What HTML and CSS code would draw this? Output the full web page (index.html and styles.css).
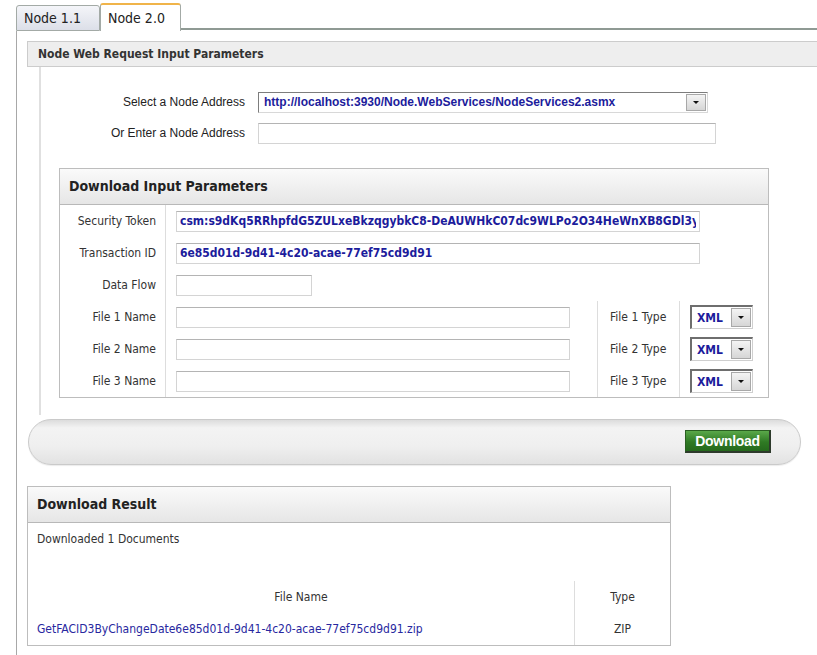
FILE: index.html
```html
<!DOCTYPE html>
<html>
<head>
<meta charset="utf-8">
<link rel="stylesheet" href="styles.css">
</head>
<body>
<div class="page">
  <div class="tabs">
    <div class="tab">Node 1.1</div>
    <div class="tab active">Node 2.0</div>
    <div class="tab-fill"></div>
  </div>
  <div class="tab-body">
    <div class="panel">
      <div class="panel-head">Node Web Request Input Parameters</div>
      <div class="panel-body">
        <div class="addr-row">
          <span class="addr-label">Select a Node Address</span>
          <div class="select addr-select">
            <span class="select-text">http://localhost:3930/Node.WebServices/NodeServices2.asmx</span>
            <span class="drop"><span class="tri"></span></span>
          </div>
        </div>
        <div class="addr-row">
          <span class="addr-label">Or Enter a Node Address</span>
          <input class="field addr-input" type="text" value="">
        </div>

        <div class="box input-box">
          <div class="box-head">Download Input Parameters</div>
          <div class="param-grid">
            <div class="lbl">Security Token</div>
            <div class="cell span3"><input class="field val w-token" type="text" value="csm:s9dKq5RRhpfdG5ZULxeBkzqgybkC8-DeAUWHkC07dc9WLPo2O34HeWnXB8GDl3yQ"></div>

            <div class="lbl">Transaction ID</div>
            <div class="cell span3"><input class="field val w-token" type="text" value="6e85d01d-9d41-4c20-acae-77ef75cd9d91"></div>

            <div class="lbl">Data Flow</div>
            <div class="cell span3"><input class="field w-flow" type="text" value=""></div>

            <div class="lbl">File 1 Name</div>
            <div class="cell sep"><input class="field w-file" type="text" value=""></div>
            <div class="cell sep type-lbl">File 1 Type</div>
            <div class="cell"><div class="select xml"><span class="select-text">XML</span><span class="drop"><span class="tri"></span></span></div></div>

            <div class="lbl">File 2 Name</div>
            <div class="cell sep"><input class="field w-file" type="text" value=""></div>
            <div class="cell sep type-lbl">File 2 Type</div>
            <div class="cell"><div class="select xml"><span class="select-text">XML</span><span class="drop"><span class="tri"></span></span></div></div>

            <div class="lbl">File 3 Name</div>
            <div class="cell sep"><input class="field w-file" type="text" value=""></div>
            <div class="cell sep type-lbl">File 3 Type</div>
            <div class="cell"><div class="select xml"><span class="select-text">XML</span><span class="drop"><span class="tri"></span></span></div></div>
          </div>
        </div>
      </div>
    </div>

    <div class="action-bar">
      <button class="dl-btn" type="button">Download</button>
    </div>

    <div class="box result-box">
      <div class="box-head">Download Result</div>
      <div class="result-body">
        <div class="result-msg">Downloaded 1 Documents</div>
        <div class="result-table">
          <div class="th name-col">File Name</div>
          <div class="th type-col">Type</div>
          <div class="td name-col link-cell"><a href="#" class="file-link">GetFACID3ByChangeDate6e85d01d-9d41-4c20-acae-77ef75cd9d91.zip</a></div>
          <div class="td type-col">ZIP</div>
        </div>
      </div>
    </div>
  </div>
</div>
</body>
</html>
```
FILE: styles.css
```css
html, body {
  margin: 0;
  padding: 0;
  background: #ffffff;
  overflow: hidden;
}

.page {
  width: 840px;
  font-family: "DejaVu Sans Condensed", "DejaVu Sans", sans-serif;
  font-size: 12px;
  color: #333333;
}

/* Tabs */
.tabs {
  display: flex;
  align-items: flex-end;
  height: 31px;
  padding-left: 16px;
}

.tab {
  box-sizing: border-box;
  height: 26px;
  width: 84px;
  padding-left: 7px;
  border: 1px solid #a3aaa6;
  border-radius: 3px 3px 0 0;
  background: linear-gradient(#f4f5f9, #dcdfe8);
  font-size: 14px;
  line-height: 24px;
  color: #222222;
}

.tab.active {
  height: 28px;
  width: 81px;
  border-top: 2px solid #f0b44a;
  border-bottom: none;
  background: #ffffff;
  line-height: 26px;
  padding-left: 7px;
}

.tab-fill {
  flex: 1;
  border-bottom: 2px solid #8f9a94;
  margin-bottom: 1px;
}

/* Tab body */
.tab-body {
  margin-left: 16px;
  border-left: 1px solid #a8a8a8;
  border-bottom: 1px solid #a8a8a8;
  padding: 10px 0 10px 10px;
}

.panel-head {
  box-sizing: border-box;
  height: 26px;
  border: 1px solid #cccccc;
  border-right: none;
  background: #eeeeee;
  padding-left: 10px;
  font-weight: bold;
  font-size: 12px;
  line-height: 24px;
  color: #333333;
}

.panel-body {
  margin-left: 12px;
  border-left: 2px solid #e0e0e0;
  padding: 25px 0 17px 0;
}

.addr-row {
  display: flex;
  align-items: center;
  gap: 13px;
  height: 20px;
  margin-bottom: 11px;
}

.addr-label {
  width: 204px;
  text-align: right;
  font-family: "Liberation Sans", Arial, sans-serif;
  font-size: 12px;
  color: #222222;
}

.select {
  box-sizing: border-box;
  display: flex;
  align-items: center;
  border: 1px solid #d8d8d8;
  border-top-color: #7d7d7d;
  border-left-color: #7d7d7d;
  background: #ffffff;
}

.select-text {
  flex: 1;
  overflow: hidden;
  white-space: nowrap;
  color: #1c1c9c;
  font-weight: bold;
}

.drop {
  box-sizing: border-box;
  display: flex;
  align-items: center;
  justify-content: center;
  width: 20px;
  height: 17px;
  margin-right: 1px;
  border: 1px solid #a8a8a8;
  background: linear-gradient(#f4f4f4, #d6d6d6);
}

.tri {
  width: 0;
  height: 0;
  border-left: 3px solid transparent;
  border-right: 3px solid transparent;
  border-top: 3px solid #111111;
}

.addr-select {
  width: 450px;
  height: 21px;
  padding-left: 5px;
}

.addr-select .select-text {
  font-family: "Liberation Sans", Arial, sans-serif;
  font-size: 12px;
}

.field {
  box-sizing: border-box;
  height: 21px;
  margin: 0;
  padding: 0 3px;
  border: 1px solid #d4d4d4;
  border-top-color: #b4b4b4;
  background: #ffffff;
  font-family: "DejaVu Sans Condensed", "DejaVu Sans", sans-serif;
  font-size: 12px;
  outline: none;
}

.field.val {
  color: #1c1c9c;
  font-weight: bold;
}

.addr-input {
  width: 458px;
}

/* Boxes */
.box {
  box-sizing: border-box;
  border: 1px solid #bdbdbd;
}

.box-head {
  box-sizing: border-box;
  height: 36px;
  padding-left: 9px;
  border-bottom: 1px solid #b8b8b8;
  background: linear-gradient(#fafafa, #e6e6e6);
  font-weight: bold;
  font-size: 14px;
  line-height: 35px;
  color: #222222;
}

.input-box {
  width: 710px;
  margin-top: 25px;
  margin-left: 18px;
}

.param-grid {
  display: grid;
  grid-template-columns: 106px 432px 82px 1fr;
  grid-auto-rows: 32px;
}

.lbl {
  box-sizing: border-box;
  display: flex;
  align-items: center;
  justify-content: flex-end;
  padding-right: 9px;
  border-right: 1px solid #dddddd;
  color: #333333;
}

.cell {
  box-sizing: border-box;
  display: flex;
  align-items: center;
  padding-left: 10px;
}

.span3 {
  grid-column: span 3;
}

.sep {
  border-right: 1px solid #dddddd;
}

.type-lbl {
  padding-left: 12px;
  color: #333333;
}

.w-token { width: 524px; }
.w-flow { width: 136px; }
.w-file { width: 394px; }

.xml {
  width: 63px;
  height: 24px;
  padding-left: 5px;
  border-width: 2px 1px 1px 2px;
  border-top-color: #6e6e6e;
  border-left-color: #6e6e6e;
  border-right-color: #cfcfcf;
  border-bottom-color: #cfcfcf;
}

.xml .select-text {
  font-size: 12px;
}

.xml .drop {
  height: 19px;
  width: 20px;
}

/* Action bar */
.action-bar {
  box-sizing: border-box;
  display: flex;
  justify-content: flex-end;
  align-items: center;
  width: 773px;
  height: 46px;
  margin: 4px 0 0 1px;
  padding-right: 29px;
  border: 1px solid #cacaca;
  border-radius: 23px;
  background: linear-gradient(#dcdcdc 0%, #f3f3f3 18%, #efefef 60%, #e2e2e2 100%);
  box-shadow: 0 1px 1px #ececec;
}

.dl-btn {
  box-sizing: border-box;
  width: 86px;
  height: 23px;
  margin-top: -2px;
  padding: 0;
  border: 1px solid #2a5e22;
  border-right: 2px solid #2e3a2c;
  border-bottom: 2px solid #2e3a2c;
  background: linear-gradient(#5aa84a, #2f7a24 55%, #25691c);
  color: #ffffff;
  font-family: "Liberation Sans", Arial, sans-serif;
  font-weight: bold;
  font-size: 14px;
  letter-spacing: -0.3px;
}

/* Result box */
.result-box {
  width: 644px;
  margin-top: 21px;
}

.result-body {
  padding-top: 9px;
}

.result-msg {
  padding-left: 9px;
  line-height: 15px;
  color: #333333;
}

.result-table {
  display: grid;
  grid-template-columns: 547px 1fr;
  grid-auto-rows: 32px;
  margin-top: 34px;
}

.th, .td {
  display: flex;
  align-items: center;
  justify-content: center;
  color: #333333;
}

.name-col {
  border-right: 1px solid #dddddd;
}

.link-cell {
  justify-content: flex-start;
  padding-left: 9px;
}

.file-link {
  color: #2828a0;
  text-decoration: none;
}
```
